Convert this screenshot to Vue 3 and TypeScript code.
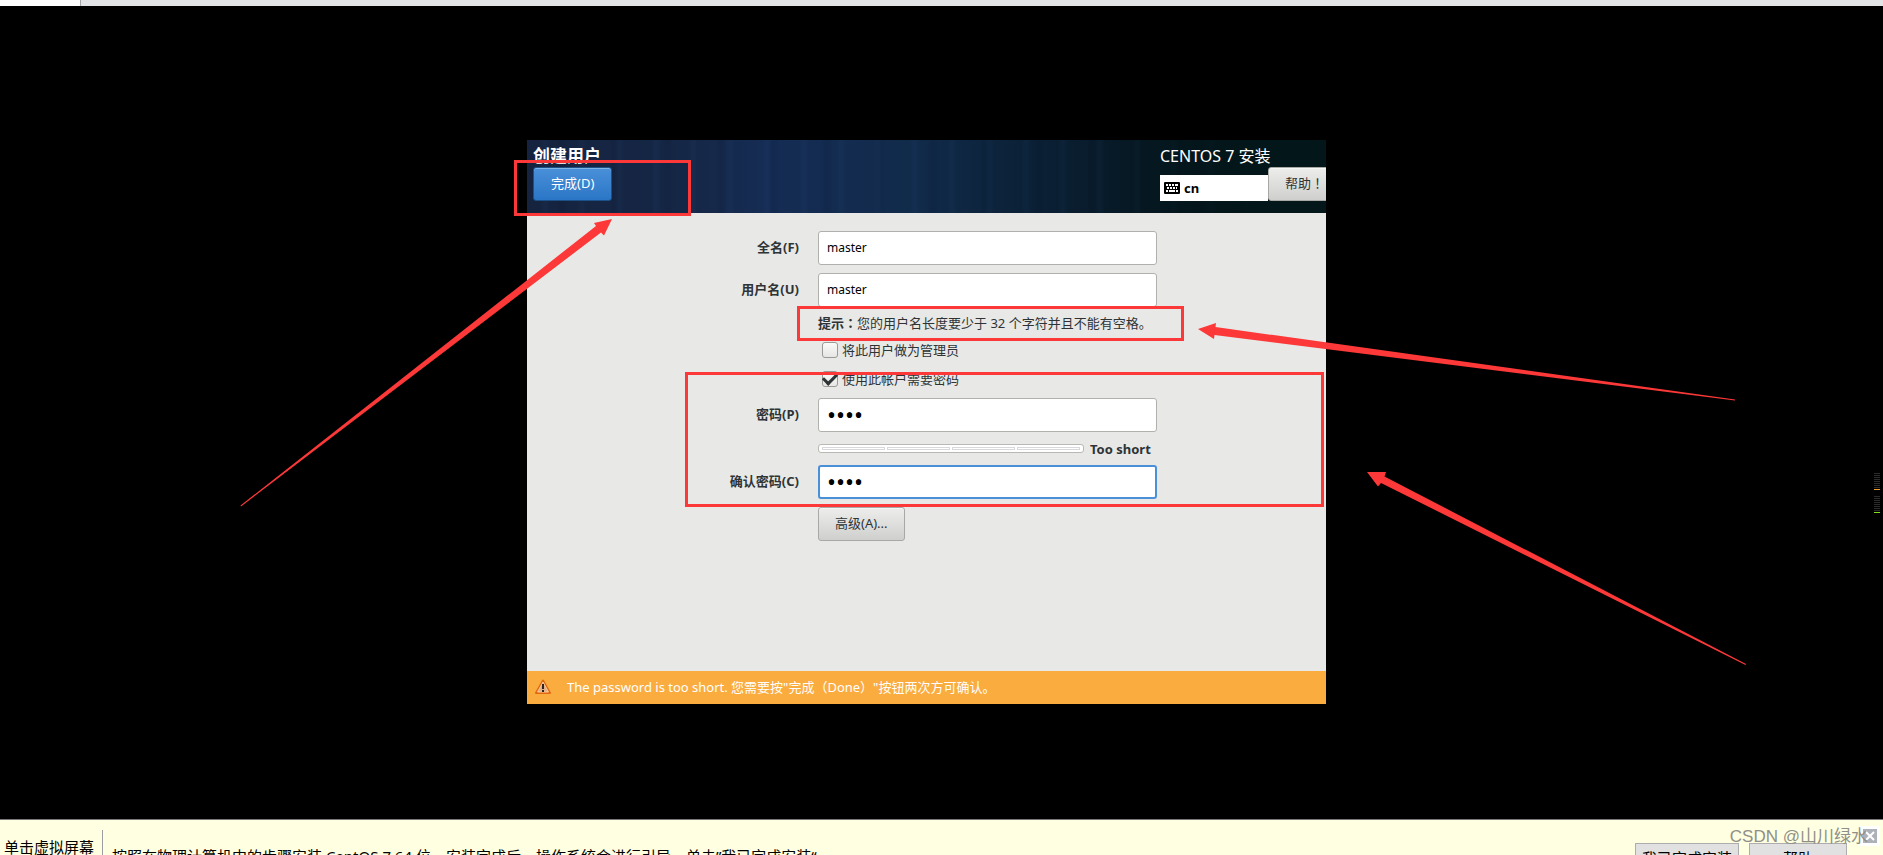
<script setup lang="ts">
import { ref } from 'vue'

const fullName = ref('master')
const userName = ref('master')
const isAdmin = ref(false)
const needsPassword = ref(true)
const password = ref('1234')
const confirmation = ref('1234')

const levels: string[] = ['orange', 'green']
</script>

<template>
  <div class="page">
    <div class="tabs"><div class="tab"></div></div>

    <div class="screen">
      <div class="stage">
        <div class="frame">
          <main class="installer">
            <header class="head">
              <div class="head-left">
                <h1>创建用户</h1>
                <button type="button" class="btn primary">完成(D)</button>
              </div>
              <div class="head-right">
                <div class="product">CENTOS 7 安装</div>
                <div class="tools">
                  <button type="button" class="layout">
                    <svg width="16" height="12" viewBox="0 0 16 12" aria-hidden="true">
                      <rect width="16" height="12" rx="1" fill="#000" />
                      <path d="M2 3h2M5 3h2M8 3h2M11 3h3M3 6h2M6 6h2M9 6h2M12 6h1M2 9h2M5 9h6M12 9h2" stroke="#fff" stroke-width="2" />
                    </svg>
                    <span>cn</span>
                  </button>
                  <button type="button" class="btn help">帮助！</button>
                </div>
              </div>
            </header>

            <form class="form" @submit.prevent>
              <label for="full">全名(F)</label>
              <input id="full" v-model="fullName" class="field" type="text" />
              <label for="user">用户名(U)</label>
              <input id="user" v-model="userName" class="field" type="text" />
              <div class="options">
                <p class="hint"><b>提示：</b>您的用户名长度要少于 32 个字符并且不能有空格。</p>
                <div class="check">
                  <input id="admin" v-model="isAdmin" type="checkbox" />
                  <label for="admin">将此用户做为管理员</label>
                </div>
                <div class="check">
                  <input id="need" v-model="needsPassword" type="checkbox" />
                  <label for="need">使用此帐户需要密码</label>
                </div>
              </div>
              <label for="pass">密码(P)</label>
              <input id="pass" v-model="password" class="field secret" type="password" />
              <div class="strength">
                <div class="meter"><i v-for="n in 4" :key="n"></i></div>
                <strong>Too short</strong>
              </div>
              <label for="confirm">确认密码(C)</label>
              <input id="confirm" v-model="confirmation" class="field secret active" type="password" />
              <button type="button" class="btn advanced">高级(A)...</button>
            </form>

            <div class="warning" role="alert">
              <svg width="16" height="16" viewBox="0 0 16 16" aria-hidden="true">
                <path d="M8 1.500 L15 14 H1 Z" fill="#f08a30" stroke="#e0680f" stroke-width="2" stroke-linejoin="round" />
                <path d="M8 3 L13.500 13 H2.500 Z" fill="#dfb08a" stroke="#fbc794" />
                <path d="M8 5v5M8 11v2" stroke="#2a2320" stroke-width="2" />
              </svg>
              <span>The password is too short. 您需要按"完成（Done）"按钮两次方可确认。</span>
            </div>
          </main>

          <div class="mark mark-done"></div>
          <div class="mark mark-hint"></div>
          <div class="mark mark-password"></div>
          <svg class="arrows" width="799" height="564" viewBox="527 140 799 564" aria-hidden="true">
            <path d="M612 219 L594 223 L596 226 L240.500 505.500 L241 506.500 L601 232.500 L604 235.500 Z" />
            <path d="M1198 329 L1216 323 L1215.500 327 L1735 399.500 L1735 400.500 L1214.500 335 L1214 339 Z" />
            <path d="M1367 472 L1386 472 L1384.500 476.500 L1746 664 L1745.500 665 L1381 483 L1378 486.500 Z" />
          </svg>
        </div>
      </div>
      <aside class="activity">
        <div v-for="level in levels" :key="level" class="bars">
          <i v-for="n in 8" :key="n"></i>
          <i :class="level"></i>
        </div>
      </aside>
    </div>

    <footer class="foot">
      <div class="foot-tip">单击虚拟屏幕</div>
      <p class="foot-text">按照在物理计算机中的步骤安装 CentOS 7 64 位。安装完成后，操作系统会进行引导，单击”我已完成安装“</p>
      <div class="foot-actions">
        <button type="button" class="native">我已完成安装</button>
        <button type="button" class="native">帮助</button>
      </div>
      <button type="button" class="close" aria-label="关闭">
        <svg width="20" height="20" viewBox="0 0 20 20" aria-hidden="true">
          <rect width="20" height="20" fill="#fff" />
          <rect x="3" y="3" width="14" height="14" fill="#adb2b9" />
          <path d="M6 6l8 8M14 6l-8 8" stroke="#fff" stroke-width="2" />
        </svg>
      </button>
      <span class="watermark">CSDN @山川绿水</span>
    </footer>
  </div>
</template>

<style>
body {
  margin: 0;
  background: #000;
}
</style>

<style scoped>
* {
  box-sizing: border-box;
}
.page {
  height: 100vh;
  display: flex;
  flex-direction: column;
  overflow: hidden;
  background: #000;
  color: #2e3436;
  font: 13px/20px "Noto Sans", "Noto Sans CJK SC", sans-serif;
  text-spacing-trim: space-all;
}
h1,
p {
  margin: 0;
}
button,
input {
  font: inherit;
  color: inherit;
}
.tabs {
  flex: none;
  height: 6px;
  background: #e3e4e6;
}
.tab {
  width: 81px;
  height: 6px;
  background: #fff;
  border-right: 1px solid #a5a8aa;
}
.screen {
  flex: 1;
  min-height: 0;
  display: flex;
}
.stage {
  flex: 1;
  display: flex;
  align-items: center;
  justify-content: center;
  padding-top: 19px;
}
.frame {
  position: relative;
  width: 799px;
}
.installer {
  overflow: hidden;
  background: #e8e8e6;
}
.head {
  height: 73px;
  display: flex;
  justify-content: space-between;
  padding-left: 6px;
  color: #fff;
  background:
    linear-gradient(90deg, transparent 70%, #031619 92%),
    repeating-linear-gradient(90deg, transparent 0 13px, rgba(60, 110, 180, 0.05) 17px 19px, transparent 23px 37px),
    repeating-linear-gradient(90deg, transparent 0 29px, rgba(0, 8, 30, 0.08) 33px 36px, transparent 41px 53px),
    linear-gradient(90deg, #15233f 0%, #152746 20%, #152c54 30%, #112b4b 48%, #0b2137 62%, #061722 80%, #021416 100%);
}
.head-left {
  display: flex;
  flex-direction: column;
  align-items: flex-start;
  padding-top: 5px;
}
h1 {
  font-size: 17px;
  line-height: 22px;
}
.btn {
  height: 34px;
  padding: 0 16px 2px;
  border: 1px solid #a8a8a4;
  border-radius: 3px;
  background: linear-gradient(#ededeb, #cfcfcd);
  box-shadow: inset 0 1px #f6f6f5;
  white-space: nowrap;
}
.primary {
  padding: 0 17px 2px;
  color: #fff;
  border-color: #1c5187;
  background: linear-gradient(#4a90d9, #2a76c6);
  box-shadow: inset 0 1px #7fb3e6;
}
.head-right {
  width: 166px;
  padding-top: 5px;
}
.product {
  font-size: 16px;
  line-height: 22px;
}
.tools {
  display: flex;
  align-items: flex-end;
}
.layout {
  flex: none;
  width: 108px;
  height: 26px;
  display: flex;
  align-items: center;
  gap: 4px;
  padding: 0 4px;
  border: 0;
  background: #fff;
  color: #000;
  font-weight: bold;
}
.help {
  flex: none;
  color: #2e3436;
  font-family: "Noto Sans", "Noto Sans CJK TC", sans-serif;
}
.form {
  height: 458px;
  padding-top: 18px;
  display: grid;
  grid-template-columns: 272px 339px;
  grid-template-rows: 34px 34px 75px 34px 17px 34px 34px;
  gap: 8px 19px;
  align-items: center;
}
.form > label {
  padding-bottom: 2px;
  text-align: right;
  font-weight: bold;
}
.field {
  width: 100%;
  height: 34px;
  padding: 0 8px 2px;
  border: 1px solid #b0b0ac;
  border-radius: 3px;
  background: #fff;
  color: #000;
  font-size: 12px;
  outline: none;
}
.secret {
  font-size: 24px;
}
.active {
  border: 2px solid #4a90d9;
  padding: 0 7px 2px;
}
.options,
.strength,
.advanced {
  grid-column: 2;
}
.options {
  align-self: start;
  display: flex;
  flex-direction: column;
  margin-top: -2px;
}
.hint {
  line-height: 20px;
  white-space: nowrap;
}
.hint b {
  font-family: "Noto Sans CJK TC", sans-serif;
}
.check {
  display: flex;
  align-items: center;
  gap: 4px;
  height: 29px;
  padding-left: 4px;
}
.hint + .check {
  margin-top: 2px;
}
.check input {
  appearance: none;
  display: grid;
  place-items: center;
  width: 16px;
  height: 16px;
  margin: 0;
  border: 1px solid #999995;
  border-radius: 3px;
  background: linear-gradient(#fbfbfa, #e6e6e4);
}
.check input:checked::after {
  content: "";
  width: 11px;
  height: 6px;
  border: solid #2e3436;
  border-width: 0 0 3px 3px;
  transform: rotate(-45deg);
  margin-bottom: 3px;
}
.strength {
  display: flex;
  align-items: center;
  gap: 6px;
}
.meter {
  width: 266px;
  height: 9px;
  display: flex;
  gap: 2px;
  padding: 2px 3px;
  border: 1px solid #b8b8b4;
  border-radius: 3px;
  background: #fff;
}
.meter i {
  flex: 1;
  border: 1px solid #d8d8dc;
}
.advanced {
  justify-self: start;
}
.warning {
  height: 33px;
  display: flex;
  align-items: center;
  gap: 16px;
  padding: 0 0 2px 8px;
  background: #fbac3e;
  color: #fff;
}
.mark {
  position: absolute;
  border: 3px solid #fd3838;
}
.mark-done {
  left: -13px;
  top: 20px;
  width: 177px;
  height: 56px;
}
.mark-hint {
  left: 270px;
  top: 166px;
  width: 387px;
  height: 35px;
}
.mark-password {
  left: 158px;
  top: 232px;
  width: 639px;
  height: 135px;
}
.arrows {
  position: absolute;
  left: 0;
  top: 0;
  overflow: visible;
  fill: #fd3838;
  pointer-events: none;
}
.activity {
  flex: none;
  width: 30px;
  padding: 467px 0 0 21px;
  display: flex;
  flex-direction: column;
  gap: 6px;
}
.bars {
  width: 6px;
  display: grid;
  gap: 1px;
}
.bars i {
  height: 1px;
  background: #2b2b2b;
}
.bars .orange {
  background: #f0a030;
}
.bars .green {
  background: #80e020;
}
.foot {
  flex: none;
  position: relative;
  height: 36px;
  display: flex;
  align-items: flex-start;
  overflow: hidden;
  border-top: 1px solid #78777a;
  background: #ffffe1;
  color: #000;
  font: 15px/20px "Noto Sans", "Noto Sans CJK SC", sans-serif;
}
.foot-tip {
  flex: none;
  width: 103px;
  height: 40px;
  margin-top: 10px;
  padding-left: 4px;
  padding-top: 7px;
  border-right: 1px solid #9c9ca4;
}
.foot-text {
  flex: 1;
  padding: 26px 0 0 9px;
  white-space: nowrap;
}
.foot-actions {
  display: flex;
  gap: 10px;
  padding-top: 23px;
  padding-right: 36px;
}
.native {
  width: 104px;
  height: 30px;
  padding: 0;
  border: 1px solid #adadad;
  background: #e1e1e1;
}
.native + .native {
  width: 98px;
}
.close {
  position: absolute;
  right: 3px;
  top: 6px;
  width: 20px;
  height: 20px;
  padding: 0;
  border: 0;
}
.close svg {
  display: block;
}
.watermark {
  position: absolute;
  right: 15px;
  top: 7px;
  color: #8f8f88;
  font: 17px/20px "Liberation Sans", "Noto Sans CJK SC", sans-serif;
}
</style>
